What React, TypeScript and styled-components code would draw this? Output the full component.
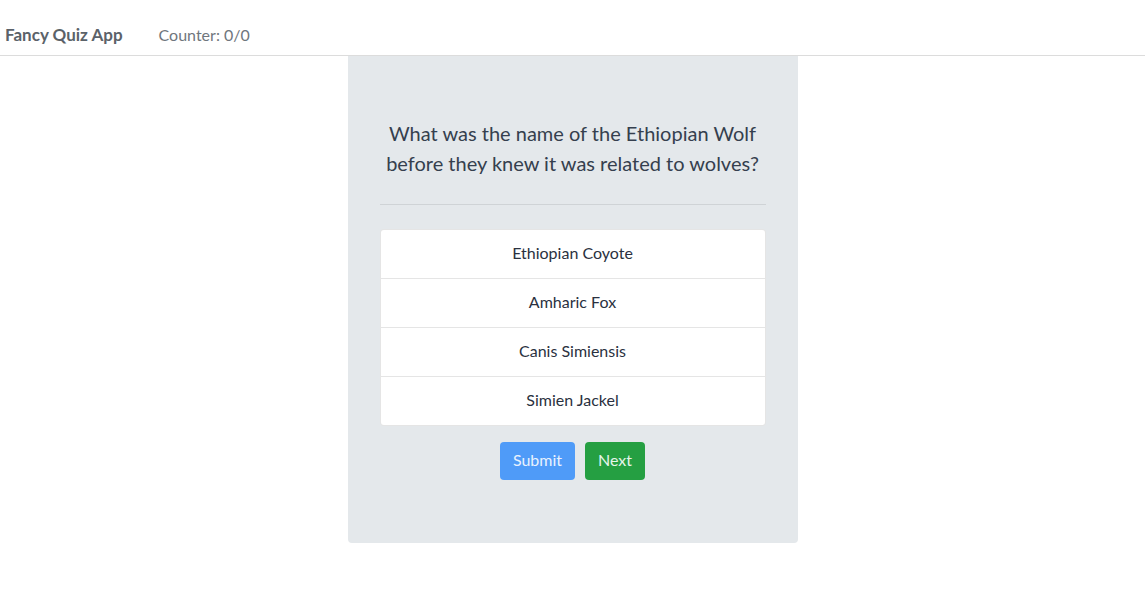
import React from "react";
import styled, { createGlobalStyle } from "styled-components";

const GlobalStyle = createGlobalStyle`
  body {
    margin: 0;
    font-family: "Lato", "Open Sans", sans-serif;
    background: #ffffff;
    color: #212529;
  }
`;

const StyleNavbar = styled.nav`
  display: flex;
  align-items: center;
  height: 41px;
  padding: 14px 5px 0;
  border-bottom: 1px solid #dcdcdc;
`;

const StyleBrand = styled.span`
  font-size: 17px;
  font-weight: 700;
  color: #5b6269;
  margin-right: 36px;
`;

const StyleCounter = styled.span`
  font-size: 16px;
  color: #6f767d;
`;

const StyleMain = styled.main`
  display: flex;
  justify-content: center;
`;

const StyleCard = styled.div`
  width: 450px;
  box-sizing: border-box;
  padding: 62px 32px 63px;
  background-color: #e4e8eb;
  border-radius: 0 0 4px 4px;
  display: flex;
  flex-direction: column;
`;

const StyleQuestion = styled.h4`
  margin: 0;
  font-size: 20px;
  font-weight: 400;
  line-height: 30px;
  text-align: center;
  color: #353f4e;
`;

const StyleRule = styled.hr`
  margin: 26px 0 24px;
  border: 0;
  border-top: 1px solid #cfd3d6;
`;

const StyleList = styled.ul`
  list-style: none;
  margin: 0;
  padding: 0;
  background: #fff;
  border: 1px solid rgba(0, 0, 0, 0.1);
  border-radius: 4px;
`;

const StyleItem = styled.li`
  height: 48px;
  display: flex;
  align-items: center;
  justify-content: center;
  padding-bottom: 4px;
  box-sizing: border-box;
  font-size: 16px;
  color: #2a3140;
  & + & {
    border-top: 1px solid rgba(0, 0, 0, 0.1);
    height: 49px;
  }
`;

const StyleActions = styled.div`
  display: flex;
  justify-content: center;
  gap: 10px;
  margin-top: 16px;
`;

const StyleButton = styled.button<{ $variant: "primary" | "success" }>`
  height: 38px;
  padding: 0 13px 3px;
  border: none;
  border-radius: 4px;
  font-family: inherit;
  font-size: 16px;
  color: ${(p) => (p.$variant === "primary" ? "#e9f2fe" : "#e6f4ea")};
  background-color: ${(p) => (p.$variant === "primary" ? "#4f9bf8" : "#259f42")};
  cursor: pointer;
`;

const answers = ["Ethiopian Coyote", "Amharic Fox", "Canis Simiensis", "Simien Jackel"];

const App = () => {
  return (
    <>
      <GlobalStyle />
      <StyleNavbar>
        <StyleBrand>Fancy Quiz App</StyleBrand>
        <StyleCounter>Counter: 0/0</StyleCounter>
      </StyleNavbar>
      <StyleMain>
        <StyleCard>
          <StyleQuestion>
            What was the name of the Ethiopian Wolf
            <br />
            before they knew it was related to wolves?
          </StyleQuestion>
          <StyleRule />
          <StyleList>
            {answers.map((a) => (
              <StyleItem key={a}>{a}</StyleItem>
            ))}
          </StyleList>
          <StyleActions>
            <StyleButton $variant="primary">Submit</StyleButton>
            <StyleButton $variant="success">Next</StyleButton>
          </StyleActions>
        </StyleCard>
      </StyleMain>
    </>
  );
};

export default App;
